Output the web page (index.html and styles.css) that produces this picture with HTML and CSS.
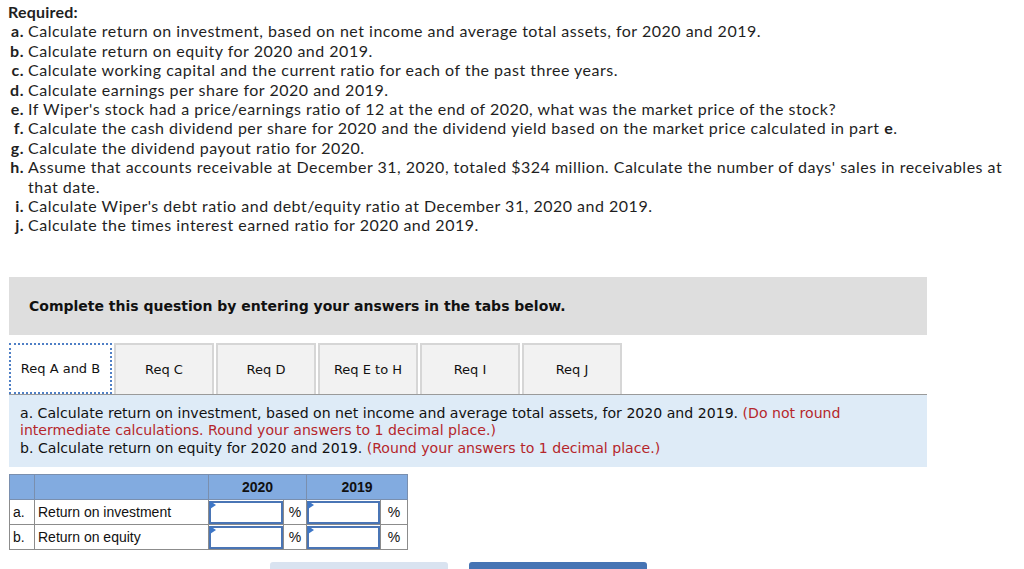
FILE: index.html
```html
<!DOCTYPE html>
<html>
<head>
<meta charset="utf-8">
<link rel="stylesheet" href="styles.css">
</head>
<body>
<div class="page">
  <div class="required">
    <div class="req-title">Required:</div>
    <ul class="req-list">
      <li><span class="lbl">a.</span><span class="txt">Calculate return on investment, based on net income and average total assets, for 2020 and 2019.</span></li>
      <li><span class="lbl">b.</span><span class="txt">Calculate return on equity for 2020 and 2019.</span></li>
      <li><span class="lbl">c.</span><span class="txt">Calculate working capital and the current ratio for each of the past three years.</span></li>
      <li><span class="lbl">d.</span><span class="txt">Calculate earnings per share for 2020 and 2019.</span></li>
      <li><span class="lbl">e.</span><span class="txt">If Wiper's stock had a price/earnings ratio of 12 at the end of 2020, what was the market price of the stock?</span></li>
      <li><span class="lbl">f.</span><span class="txt">Calculate the cash dividend per share for 2020 and the dividend yield based on the market price calculated in part <b>e</b>.</span></li>
      <li><span class="lbl">g.</span><span class="txt">Calculate the dividend payout ratio for 2020.</span></li>
      <li><span class="lbl">h.</span><span class="txt">Assume that accounts receivable at December 31, 2020, totaled $324 million. Calculate the number of days' sales in receivables at that date.</span></li>
      <li><span class="lbl">i.</span><span class="txt">Calculate Wiper's debt ratio and debt/equity ratio at December 31, 2020 and 2019.</span></li>
      <li><span class="lbl">j.</span><span class="txt">Calculate the times interest earned ratio for 2020 and 2019.</span></li>
    </ul>
  </div>

  <div class="complete-box">Complete this question by entering your answers in the tabs below.</div>

  <div class="tabs">
    <div class="tab active">Req A and B</div>
    <div class="tab">Req C</div>
    <div class="tab">Req D</div>
    <div class="tab">Req E to H</div>
    <div class="tab">Req I</div>
    <div class="tab">Req J</div>
  </div>

  <div class="panel">
    <p>a. Calculate return on investment, based on net income and average total assets, for 2020 and 2019. <span class="red">(Do not round</span> <span class="red">intermediate calculations. Round your answers to 1 decimal place.)</span></p>
    <p>b. Calculate return on equity for 2020 and 2019. <span class="red">(Round your answers to 1 decimal place.)</span></p>
  </div>

  <table class="answers">
    <colgroup>
      <col class="c-lbl"><col class="c-name"><col class="c-in"><col class="c-pct"><col class="c-in2"><col class="c-pct2">
    </colgroup>
    <tr class="head">
      <th></th><th></th><th colspan="2">2020</th><th colspan="2">2019</th>
    </tr>
    <tr>
      <td>a.</td><td>Return on investment</td><td class="in"><div class="box"></div></td><td class="pct">%</td><td class="in"><div class="box"></div></td><td class="pct">%</td>
    </tr>
    <tr>
      <td>b.</td><td>Return on equity</td><td class="in"><div class="box"></div></td><td class="pct">%</td><td class="in"><div class="box"></div></td><td class="pct">%</td>
    </tr>
  </table>

  <div class="buttons">
    <div class="btn prev"></div>
    <div class="btn next"></div>
  </div>
</div>
</body>
</html>
```

FILE: styles.css
```css
html, body {
  margin: 0;
  padding: 0;
  background: #fff;
  overflow: hidden;
}

.page {
  width: 1024px;
  height: 569px;
  overflow: hidden;
}

.required {
  padding: 2px 0 0 8px;
  font-family: "Lato", "Open Sans", sans-serif;
  font-size: 16px;
  letter-spacing: 0.5px;
  line-height: 19.4px;
  color: #1f1f1f;
}

.req-title {
  font-weight: bold;
  letter-spacing: 0.2px;
}

.req-list {
  list-style: none;
  margin: 0;
  padding: 0;
}

.req-list li {
  display: flex;
}

.req-list .lbl {
  flex: 0 0 16px;
  text-align: right;
  font-weight: bold;
  padding-right: 4px;
}

.req-list .txt {
  flex: 1;
  padding-right: 4px;
}

.complete-box {
  margin: 42px 0 0 9px;
  width: 918px;
  height: 58px;
  box-sizing: border-box;
  padding: 0 20px;
  display: flex;
  align-items: center;
  background: #dedede;
  font-family: "DejaVu Sans", Tahoma, sans-serif;
  font-weight: bold;
  font-size: 14px;
  color: #111;
}

.tabs {
  display: flex;
  gap: 2px;
  margin: 8px 0 0 9px;
  height: 51px;
}

.tab {
  width: 100px;
  box-sizing: border-box;
  background: #f2f2f2;
  border: 2px solid #d6d6d6;
  border-bottom: none;
  display: flex;
  align-items: center;
  justify-content: center;
  font-family: "DejaVu Sans", Tahoma, sans-serif;
  font-size: 13px;
  color: #111;
}

.tab.active {
  width: 103px;
  background: #fff;
  border: 2px dotted #4f7fc5;
}

.panel {
  margin-left: 9px;
  width: 918px;
  box-sizing: border-box;
  border-top: 1px solid #9a9a9a;
  background: #deebf7;
  padding: 10px 11px 10px;
  font-family: "DejaVu Sans", Tahoma, sans-serif;
  font-size: 14.1px;
  line-height: 17.5px;
  color: #111;
}

.panel p {
  margin: 0;
}

.red {
  color: #b5262b;
}

.answers {
  margin: 7px 0 0 9px;
  border-collapse: collapse;
  font-family: "Liberation Sans", Arial, sans-serif;
  font-size: 14px;
  color: #111;
}

.c-lbl { width: 25px; }
.c-name { width: 174px; }
.c-in { width: 75px; }
.c-pct { width: 23px; }
.c-in2 { width: 74px; }
.c-pct2 { width: 27px; }

.answers td, .answers th {
  border: 1px solid #8c8c8c;
  height: 25px;
  padding: 0 0 0 3px;
  box-sizing: border-box;
}

.answers tr.head th {
  background: #82abe0;
  font-weight: bold;
  text-align: center;
  border: 1px solid #7a8fae;
  padding: 0;
  height: 25px;
}

.answers td.in {
  padding: 0;
  position: relative;
}

.answers td.pct {
  text-align: center;
  padding: 0;
}

.box {
  height: 23px;
  border: 2px solid #4a75b5;
  box-sizing: border-box;
  background: #fff;
}

.answers td.in::before {
  content: "";
  position: absolute;
  left: 1px;
  top: 1px;
  border-left: 6px solid #3d76c7;
  border-top: 4px solid transparent;
  border-bottom: 4px solid transparent;
}

.buttons {
  display: flex;
  gap: 21px;
  margin: 12px 0 0 270px;
}

.btn {
  width: 178px;
  height: 20px;
  border-radius: 3px 3px 0 0;
}

.btn.prev { background: #d9e3f0; }
.btn.next { background: #4674b4; }
```
